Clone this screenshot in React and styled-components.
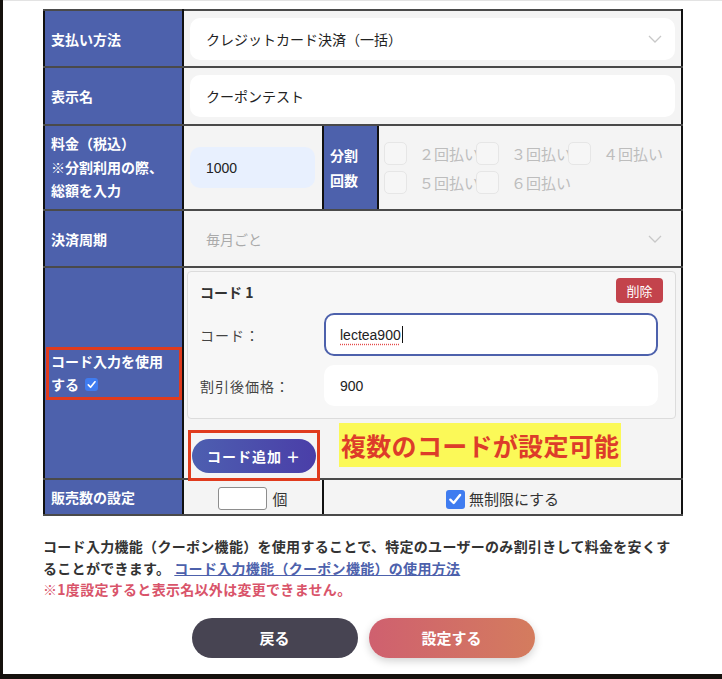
import React from "react";
import styled, { createGlobalStyle } from "styled-components";

const GlobalStyle = createGlobalStyle`
  html, body {
    margin: 0;
    padding: 0;
    background: #15110d;
  }
  body {
    font-family: "Noto Sans CJK JP", "Noto Sans", sans-serif;
    color: #333;
  }
`;

const Panel = styled.div`
  margin-left: 3px;
  height: 674px;
  box-sizing: border-box;
  background: #fff;
  border-top: 1px solid #e3e3e3;
  padding: 8px 39px 0 40px;
`;

const Table = styled.table`
  width: 638px;
  table-layout: fixed;
  border-collapse: collapse;
  border-spacing: 0;
`;

const Row = styled.tr`
  height: ${({ $h }) => $h}px;
`;

const Label = styled.th`
  background: #4d61ac;
  color: #fff;
  font-size: 14px;
  font-weight: 700;
  text-align: left;
  line-height: ${({ $lh }) => $lh || "20px"};
  padding: ${({ $pad }) => $pad || "0 6px"};
  border-top: 2px solid #4a4a4a;
  border-bottom: 2px solid #4a4a4a;
  border-left: 2px solid #111;
  border-right: 2px solid #111;
  vertical-align: middle;
`;

const Cell = styled.td`
  background: #f4f4f4;
  padding: ${({ $pad }) => $pad || "0 6px"};
  border-top: 2px solid #4a4a4a;
  border-bottom: 2px solid #4a4a4a;
  border-left: 2px solid #111;
  border-right: 2px solid #111;
  vertical-align: ${({ $valign }) => $valign || "middle"};
  text-align: ${({ $align }) => $align || "left"};
`;

const Field = styled.div`
  display: flex;
  align-items: center;
  justify-content: space-between;
  box-sizing: border-box;
  height: ${({ $h }) => $h || 42}px;
  width: ${({ $w }) => ($w ? `${$w}px` : "100%")};
  padding: 0 13px 0 16px;
  border-radius: 10px;
  background: ${({ $bg }) => $bg || "#fff"};
  font-family: "Liberation Sans", "Noto Sans CJK JP", sans-serif;
  font-size: 14px;
  color: ${({ $muted }) => ($muted ? "#aaa" : "#222")};
`;

const Chevron = () => (
  <svg width="14" height="8" viewBox="0 0 14 8">
    <polyline points="1,1 7,7 13,1" fill="none" stroke="#c8c8c8" strokeWidth="1.3" />
  </svg>
);

const Options = styled.div`
  display: flex;
  flex-wrap: wrap;
  row-gap: 6px;
  width: 290px;
`;

const Option = styled.div`
  display: flex;
  align-items: center;
  width: 92px;
  height: 23px;
  white-space: nowrap;
  color: #bdbdbd;
  font-size: 15px;
`;

const GhostBox = styled.span`
  flex: none;
  width: 21px;
  height: 21px;
  border: 1px solid #e6e6e6;
  border-radius: 5px;
  background: #f6f6f6;
  margin-right: 12px;
`;

const Card = styled.div`
  background: #f7f7f7;
  border: 1px solid #dcdcdc;
  border-radius: 4px;
  padding: 6px 19px 12px 12px;
`;

const CardHead = styled.div`
  display: flex;
  align-items: center;
  justify-content: space-between;
  margin-right: -7px;
  margin-bottom: 10px;
`;

const CardTitle = styled.div`
  font-size: 14px;
  font-weight: 700;
  color: #333;
  padding-top: 2px;
`;

const DeleteButton = styled.button`
  width: 47px;
  height: 25px;
  border: none;
  border-radius: 4px;
  background: #c3434c;
  color: #fff;
  font-family: inherit;
  font-size: 13px;
  padding: 0;
`;

const FieldRow = styled.div`
  display: grid;
  grid-template-columns: 124px 334px;
  align-items: center;
  margin-top: ${({ $mt }) => $mt || 0}px;
`;

const FieldLabel = styled.div`
  font-size: 14px;
  color: #444;
  letter-spacing: 1px;
`;

const FocusField = styled(Field)`
  border: 2px solid #4d61ac;
  padding-left: 14px;
  justify-content: flex-start;
`;

const Spell = styled.span`
  text-decoration: underline dotted #e34b4b;
  text-underline-offset: 4px;
`;

const Caret = styled.span`
  display: inline-block;
  width: 1px;
  height: 17px;
  background: #111;
  margin-left: 1px;
`;

const AddRow = styled.div`
  display: flex;
  align-items: flex-start;
  margin-top: 4px;
  margin-left: 1px;
  margin-bottom: -5px;
  position: relative;
`;

const RedFrame = styled.div`
  border: 3px solid #e03b1d;
  padding: ${({ $pad }) => $pad};
  margin-top: ${({ $mt }) => $mt || 0}px;
`;

const AddButton = styled.button`
  display: block;
  width: 124px;
  height: 34px;
  border: none;
  border-radius: 17px;
  background: linear-gradient(90deg, #4d5fb0, #4a3ea8);
  color: #fff;
  font-family: inherit;
  font-size: 14px;
  font-weight: 700;
  letter-spacing: 1px;
  padding: 0;
`;

const Note = styled.div`
  margin-left: 19px;
  background: #fbf958;
  color: #dd3c2a;
  font-family: "Noto Sans CJK JP", serif;
  font-size: 25px;
  font-weight: 700;
  line-height: 44px;
  padding: 0 2px;
  letter-spacing: 0.3px;
`;

const SmallCheck = styled.span`
  display: inline-flex;
  align-items: center;
  justify-content: center;
  vertical-align: middle;
  width: ${({ $s }) => $s}px;
  height: ${({ $s }) => $s}px;
  border-radius: 3px;
  background: #3f7cf0;
  margin: ${({ $m }) => $m || 0};
`;

const Tick = ({ size }) => (
  <svg width={size} height={size} viewBox="0 0 12 12">
    <polyline points="2.5,6.5 5,9 9.8,3" fill="none" stroke="#fff" strokeWidth="1.8" strokeLinecap="round" strokeLinejoin="round" />
  </svg>
);

const CountInput = styled.span`
  display: inline-block;
  vertical-align: middle;
  width: 47px;
  height: 21px;
  border: 1px solid #8d8d8d;
  border-radius: 3px;
  background: #fff;
  margin-right: 5px;
`;

const Inline = styled.span`
  vertical-align: middle;
  font-size: ${({ $fs }) => $fs || 15}px;
  color: #333;
`;

const Description = styled.p`
  margin: 20px 0 0;
  font-size: 14px;
  font-weight: 700;
  line-height: 21.5px;
  letter-spacing: 0.3px;
  color: #333;
`;

const Link = styled.a`
  color: #4d61ac;
  text-decoration: underline;
  margin-left: 4px;
`;

const Warning = styled.span`
  display: block;
  color: #d9546a;
`;

const Buttons = styled.div`
  display: flex;
  justify-content: center;
  gap: 11px;
  margin-top: 17px;
`;

const PillButton = styled.button`
  width: 166px;
  height: 40px;
  border: none;
  border-radius: 20px;
  background: ${({ $primary }) =>
    $primary ? "linear-gradient(90deg, #cf606f, #d47c5e)" : "#474452"};
  box-shadow: ${({ $primary }) => ($primary ? "0 3px 8px rgba(0,0,0,0.18)" : "none")};
  color: #fff;
  font-family: inherit;
  font-size: 15px;
  font-weight: 700;
`;

const App = () => {
  const installments = ["２回払い", "３回払い", "４回払い", "５回払い", "６回払い"];
  return (
    <>
      <GlobalStyle />
      <Panel>
        <Table>
          <colgroup>
            <col style={{ width: 139 }} />
            <col style={{ width: 140 }} />
            <col style={{ width: 55 }} />
            <col style={{ width: 304 }} />
          </colgroup>
          <tbody>
            <Row $h={57}>
              <Label>支払い方法</Label>
              <Cell colSpan={3}>
                <Field>
                  <span>クレジットカード決済（一括）</span>
                  <Chevron />
                </Field>
              </Cell>
            </Row>
            <Row $h={58}>
              <Label>表示名</Label>
              <Cell colSpan={3}>
                <Field>クーポンテスト</Field>
              </Cell>
            </Row>
            <Row $h={85}>
              <Label $lh="23.5px">
                料金（税込）
                <br />
                ※分割利用の際、
                <br />
                総額を入力
              </Label>
              <Cell>
                <Field $w={125} $h={41} $bg="#e8f0fe">1000</Field>
              </Cell>
              <Label $lh="25px" $pad="0 6px">
                分割
                <br />
                回数
              </Label>
              <Cell $pad="0 0 0 5px">
                <Options>
                  {installments.map((t) => (
                    <Option key={t}>
                      <GhostBox />
                      {t}
                    </Option>
                  ))}
                </Options>
              </Cell>
            </Row>
            <Row $h={57}>
              <Label>決済周期</Label>
              <Cell colSpan={3}>
                <Field $bg="transparent" $muted>
                  <span>毎月ごと</span>
                  <Chevron />
                </Field>
              </Cell>
            </Row>
            <Row $h={212}>
              <Label $pad="0 0 0 1px" $lh="23px">
                <RedFrame $pad="0 0 1px 2px">
                  コード入力を使用
                  <br />
                  する
                  <SmallCheck $s={13} $m="0 0 3px 6px">
                    <Tick size={11} />
                  </SmallCheck>
                </RedFrame>
              </Label>
              <Cell colSpan={3} $valign="top" $pad="3px 5px 0 3px">
                <Card>
                  <CardHead>
                    <CardTitle>コード 1</CardTitle>
                    <DeleteButton>削除</DeleteButton>
                  </CardHead>
                  <FieldRow>
                    <FieldLabel>コード：</FieldLabel>
                    <FocusField $h={43}>
                      <Spell>lectea900</Spell>
                      <Caret />
                    </FocusField>
                  </FieldRow>
                  <FieldRow $mt={9}>
                    <FieldLabel>割引後価格：</FieldLabel>
                    <Field $h={41}>900</Field>
                  </FieldRow>
                </Card>
                <AddRow>
                  <RedFrame $pad="6px 1px 5px 1px" $mt={7}>
                    <AddButton>コード追加 ＋</AddButton>
                  </RedFrame>
                  <Note>複数のコードが設定可能</Note>
                </AddRow>
              </Cell>
            </Row>
            <Row $h={36}>
              <Label>販売数の設定</Label>
              <Cell $align="center">
                <CountInput />
                <Inline>個</Inline>
              </Cell>
              <Cell colSpan={2} $align="center">
                <SmallCheck $s={19} $m="0 4px 0 0">
                  <Tick size={16} />
                </SmallCheck>
                <Inline $fs={15}>無制限にする</Inline>
              </Cell>
            </Row>
          </tbody>
        </Table>
        <Description>
          コード入力機能（クーポン機能）を使用することで、特定のユーザーのみ割引きして料金を安くすることができます。
          <Link href="#">コード入力機能（クーポン機能）の使用方法</Link>
          <Warning>※1度設定すると表示名以外は変更できません。</Warning>
        </Description>
        <Buttons>
          <PillButton>戻る</PillButton>
          <PillButton $primary>設定する</PillButton>
        </Buttons>
      </Panel>
    </>
  );
};

export default App;
